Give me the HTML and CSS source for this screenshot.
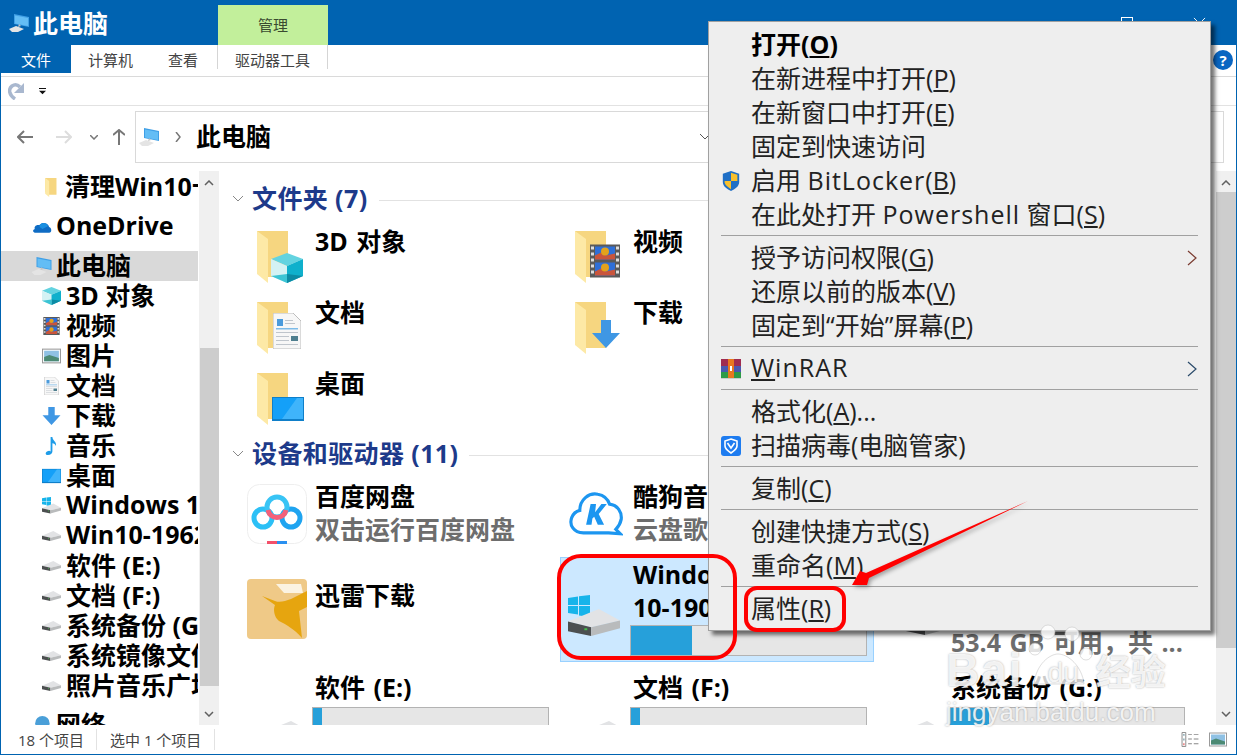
FILE: index.html
```html
<!DOCTYPE html>
<html lang="zh-CN">
<head>
    <meta charset="UTF-8">
    <title>此电脑</title>
    <link rel="stylesheet" href="styles.css">
</head>
<body>
    <!-- Shared icons -->
    <svg class="sprite" width="0" height="0">
        <symbol id="pc" viewBox="0 0 20 18">
            <path d="M5 0l15 3v10L5 10z" fill="#3f9fe6"/>
            <path d="M6 1.500l13 2.500v8L6 9.500z" fill="#63bdf5"/>
            <path d="M0 15l7-3 8 3-6 3H3z" fill="#e4e4e4"/>
            <path d="M10 10l2 2-3 1z" fill="#c4c4c4"/>
        </symbol>
        <symbol id="folder" viewBox="0 0 32 52">
            <path d="M0 0h31v46H10L0 38z" fill="#f6d680"/>
            <path d="M0 0l11 8v44L0 43z" fill="#fde9a6"/>
        </symbol>
        <symbol id="cube" viewBox="0 0 32 30">
            <path d="M16 0l16 6-16 7L0 6z" fill="#63d3e0"/>
            <path d="M0 6l16 7v17L0 23z" fill="#d4f2f4"/>
            <path d="M32 6L16 13v17l16-7z" fill="#0fb0cc"/>
            <path d="M16 21l16 2-16 7z" fill="#0c8ba4"/>
            <path d="M16 21L0 23l16 7z" fill="#3cc4d4"/>
        </symbol>
        <symbol id="film" viewBox="0 0 30 33">
            <path d="M0 0h30v33H0z" fill="#5a5a5a"/>
            <path d="M5 2h20v13H5zM5 18h20v13H5z" fill="#2e6fd8"/>
            <path d="M5 11l6-3 5 3 9-2v6H5zM5 27l6-3 5 3 9-2v6H5z" fill="#c9553c"/>
            <circle cx="15" cy="7" r="4" fill="#e2a21c"/>
            <circle cx="15" cy="23" r="4" fill="#e2a21c"/>
            <path d="M1 2h3v3H1zM1 8h3v3H1zM1 14h3v3H1zM1 20h3v3H1zM1 26h3v3H1zM26 2h3v3h-3zM26 8h3v3h-3zM26 14h3v3h-3zM26 20h3v3h-3zM26 26h3v3h-3z" fill="#ddd"/>
        </symbol>
        <symbol id="pic" viewBox="0 0 18 14">
            <path d="M0 0h18v14H0z" fill="#9a9a9a"/>
            <path d="M1 1h16v12H1z" fill="#fff"/>
            <path d="M2 2h14v10H2z" fill="#8fc1e4"/>
            <path d="M2 8l5-2 9 3v3H2z" fill="#4c8a74"/>
        </symbol>
        <symbol id="doc" viewBox="0 0 28 36">
            <path d="M0 0h20l8 8v28H0z" fill="#f7f7f7" stroke="#bdbdbd"/>
            <path d="M4 6h6v7H4z" fill="#4b9bdc"/>
            <path d="M3 15h22v1.500H3z" fill="#7cbbe8"/>
            <path d="M3 19h22v1H3zM3 23h13v1H3zM3 27h13v1H3zM3 31h22v1H3zM12 7h8v1h-8zM12 10h10v1H12z" fill="#bfc5cc"/>
            <path d="M18 23h7v5h-7z" fill="#4f7f8f"/>
        </symbol>
        <symbol id="down" viewBox="0 0 28 28">
            <path d="M9 0h10v13h9L14 28 0 13h9z" fill="#3f97e4"/>
        </symbol>
        <symbol id="desktop" viewBox="0 0 32 24">
            <path d="M0 0h32v24H0z" fill="#0f7fc9"/>
            <path d="M1 1h30v21H1z" fill="#14a0f8"/>
            <path d="M10 22L25 1h6v21z" fill="#3fb4fb"/>
        </symbol>
        <symbol id="drive" viewBox="0 0 54 28">
            <path d="M0 13L32 0l22 12-30 7z" fill="#e2e3e5"/>
            <path d="M0 13l24 6v9L0 23z" fill="#4c4f50"/>
            <path d="M24 19l30-7v8l-30 8z" fill="#b9bbbc"/>
            <path d="M17 20h3v2h-3z" fill="#45c24a"/>
        </symbol>
        <symbol id="win" viewBox="0 0 22 22">
            <path d="M0 3l10-1.500V10H0zM11 1.300L22 0v10H11zM0 11h10v8.500L0 18zM11 11h11v11l-11-1.500z" fill="#17b4ea"/>
        </symbol>
        <symbol id="note" viewBox="0 0 14 20">
            <path d="M6 0h2c0 4 5 5 4 10-1-2-2-3-4-3v9c0 2-2 4-5 4s-3-3-1-4 3-1 4 0z" fill="#1e9ce8"/>
        </symbol>
    </svg>

    <div class="window">
        <div class="titlebar">
            <svg class="title-icon"><use href="#pc"/></svg>
            <span class="title-text">此电脑</span>
            <div class="manage-tab">管理</div>
            <div class="win-controls">
                <span class="win-max"></span>
                <svg class="win-close" viewBox="0 0 14 14"><path d="M1 1l12 12M13 1L1 13" stroke="#fff" fill="none"/></svg>
            </div>
        </div>

        <div class="tabs">
            <div class="tab tab-file">文件</div>
            <div class="tab tab-pc">计算机</div>
            <div class="tab tab-view">查看</div>
            <div class="tab tab-tools">驱动器工具</div>
            <div class="help">?</div>
        </div>

        <div class="qat">
            <svg class="qat-undo" viewBox="0 0 18 18">
                <path d="M7 17C1 13 0 7 4 4c3-2 6-1 8 1" stroke="#a9b8cf" stroke-width="3.500" fill="none"/>
                <path d="M16 1v10H6z" fill="#a9b8cf"/>
            </svg>
            <svg class="qat-more" viewBox="0 0 8 8"><path d="M0 0h8v1H0zM0 3h8L4 7z" fill="#111"/></svg>
        </div>

        <div class="addressbar">
            <div class="nav-btns">
                <svg class="btn-back" viewBox="0 0 16 14"><path d="M7 1L1 7l6 6M1 7h15" stroke="#777" stroke-width="2" fill="none"/></svg>
                <svg class="btn-forward" viewBox="0 0 16 14"><path d="M9 1l6 6-6 6M15 7H0" stroke="#ddd" stroke-width="2" fill="none"/></svg>
                <svg class="btn-drop" viewBox="0 0 8 5"><path d="M0 0l4 4 4-4" stroke="#777" stroke-width="1.500" fill="none"/></svg>
                <svg class="btn-up" viewBox="0 0 12 16"><path d="M0 6l6-5 6 5M6 1v15" stroke="#777" stroke-width="2" fill="none"/></svg>
            </div>
            <div class="address">
                <svg class="address-icon"><use href="#pc"/></svg>
                <svg class="address-sep" viewBox="0 0 6 10"><path d="M1 0l4 5-4 5" stroke="#777" stroke-width="1.500" fill="none"/></svg>
                <span class="address-text">此电脑</span>
                <svg class="address-drop" viewBox="0 0 10 6"><path d="M0 0l5 5 5-5" stroke="#555" fill="none"/></svg>
            </div>
        </div>

        <div class="main">
            <div class="nav">
                <div class="nav-item"><svg class="nav-pin"><use href="#folder"/></svg><span>清理Win10卡顿文件</span></div>
                <div class="nav-item nav-root nav-onedrive">
                    <svg class="nav-icon" viewBox="0 0 22 14"><path d="M5 13h14c3 0 3-5 0-6-1-4-7-6-10-2-4-1-6 2-5 4-3 1-2 4 1 4z" fill="#0f6cc4"/><path d="M9 5c2-3 7-3 9 1l-6 3-3-2z" fill="#1a8fe0"/></svg>
                    <span>OneDrive</span>
                </div>
                <div class="nav-item nav-root nav-active"><svg class="nav-icon"><use href="#pc"/></svg><span>此电脑</span></div>
                <div class="nav-item"><svg class="nav-icon"><use href="#cube"/></svg><span>3D 对象</span></div>
                <div class="nav-item"><svg class="nav-icon"><use href="#film"/></svg><span>视频</span></div>
                <div class="nav-item"><svg class="nav-icon"><use href="#pic"/></svg><span>图片</span></div>
                <div class="nav-item"><svg class="nav-icon"><use href="#doc"/></svg><span>文档</span></div>
                <div class="nav-item"><svg class="nav-icon"><use href="#down"/></svg><span>下载</span></div>
                <div class="nav-item"><svg class="nav-icon"><use href="#note"/></svg><span>音乐</span></div>
                <div class="nav-item"><svg class="nav-icon"><use href="#desktop"/></svg><span>桌面</span></div>
                <div class="nav-item"><svg class="nav-icon nav-win"><use href="#win" width="9" height="9"/><use href="#drive" y="5" height="13"/></svg><span>Windows 10-1909 (C:)</span></div>
                <div class="nav-item"><svg class="nav-icon"><use href="#drive"/></svg><span>Win10-1962 (D:)</span></div>
                <div class="nav-item"><svg class="nav-icon"><use href="#drive"/></svg><span>软件 (E:)</span></div>
                <div class="nav-item"><svg class="nav-icon"><use href="#drive"/></svg><span>文档 (F:)</span></div>
                <div class="nav-item"><svg class="nav-icon"><use href="#drive"/></svg><span>系统备份 (G:)</span></div>
                <div class="nav-item"><svg class="nav-icon"><use href="#drive"/></svg><span>系统镜像文件 (H:)</span></div>
                <div class="nav-item"><svg class="nav-icon"><use href="#drive"/></svg><span>照片音乐广场 (I:)</span></div>
                <div class="nav-item nav-root nav-network">
                    <svg class="nav-icon" viewBox="0 0 22 20"><circle cx="12" cy="8" r="8" fill="#4a9fd8"/><path d="M0 12h14v8H0z" fill="#3a86c8"/></svg>
                    <span>网络</span>
                </div>
            </div>
            <div class="scrollbar nav-scroll">
                <svg class="arrow" viewBox="0 0 10 6"><path d="M1 5l4-4 4 4" stroke="#606060" stroke-width="1.500" fill="none"/></svg>
                <div class="thumb nav-thumb"></div>
                <svg class="arrow arrow-end" viewBox="0 0 10 6"><path d="M1 1l4 4 4-4" stroke="#606060" stroke-width="1.500" fill="none"/></svg>
            </div>

            <div class="content">
                <div class="group-head">
                    <svg class="group-chevron" viewBox="0 0 10 6"><path d="M0 0l5 5 5-5" stroke="#888" fill="none"/></svg>
                    <span class="group-title">文件夹 (7)</span>
                    <div class="group-line"></div>
                </div>
                <div class="tiles folders">
                    <div class="tile">
                        <div class="tile-icon folder-icon"><svg class="folder-back"><use href="#folder"/></svg><svg class="over over-cube"><use href="#cube"/></svg></div>
                        <div class="tile-text"><div class="tile-name">3D 对象</div></div>
                    </div>
                    <div class="tile">
                        <div class="tile-icon folder-icon"><svg class="folder-back"><use href="#folder"/></svg><svg class="over over-film"><use href="#film"/></svg></div>
                        <div class="tile-text"><div class="tile-name">视频</div></div>
                    </div>
                    <div class="tile">
                        <div class="tile-icon folder-icon"><svg class="folder-back"><use href="#folder"/></svg></div>
                        <div class="tile-text"><div class="tile-name">图片</div></div>
                    </div>
                    <div class="tile">
                        <div class="tile-icon folder-icon"><svg class="folder-back"><use href="#folder"/></svg><svg class="over over-doc"><use href="#doc"/></svg></div>
                        <div class="tile-text"><div class="tile-name">文档</div></div>
                    </div>
                    <div class="tile">
                        <div class="tile-icon folder-icon"><svg class="folder-back"><use href="#folder"/></svg><svg class="over over-down"><use href="#down"/></svg></div>
                        <div class="tile-text"><div class="tile-name">下载</div></div>
                    </div>
                    <div class="tile">
                        <div class="tile-icon folder-icon"><svg class="folder-back"><use href="#folder"/></svg></div>
                        <div class="tile-text"><div class="tile-name">音乐</div></div>
                    </div>
                    <div class="tile">
                        <div class="tile-icon folder-icon"><svg class="folder-back"><use href="#folder"/></svg><svg class="over over-desktop"><use href="#desktop"/></svg></div>
                        <div class="tile-text"><div class="tile-name">桌面</div></div>
                    </div>
                </div>

                <div class="group-head group-devices">
                    <svg class="group-chevron" viewBox="0 0 10 6"><path d="M0 0l5 5 5-5" stroke="#888" fill="none"/></svg>
                    <span class="group-title">设备和驱动器 (11)</span>
                    <div class="group-line"></div>
                </div>
                <div class="tiles devices">
                    <div class="tile tile-app">
                        <div class="tile-icon app-icon">
                            <svg viewBox="0 0 60 60">
                                <rect x="0.500" y="0.500" width="59" height="59" rx="12" fill="#fff" stroke="#eee"/>
                                <circle cx="16" cy="34" r="9" fill="none" stroke="#2cc0f6" stroke-width="5"/>
                                <circle cx="44" cy="34" r="9" fill="none" stroke="#1fa4f0" stroke-width="5"/>
                                <circle cx="30" cy="23" r="10" fill="none" stroke="#38c4f5" stroke-width="5"/>
                                <path d="M21 26c2 10 16 10 18 0" fill="none" stroke="#f4607a" stroke-width="5"/>
                                <path d="M20 57h10v3H20z" fill="#f4506a"/>
                                <path d="M30 57h10v3H30z" fill="#2a90f0"/>
                            </svg>
                        </div>
                        <div class="tile-text"><div class="tile-name">百度网盘</div><div class="tile-sub">双击运行百度网盘</div></div>
                    </div>
                    <div class="tile tile-app">
                        <div class="tile-icon app-icon">
                            <svg class="kugou" viewBox="0 0 60 60">
                                <path d="M16 51C5 51 0 42 3 34c2-5 5-7 9-8 0-12 10-20 20-18 6 1 11 5 13 11 9 1 14 9 13 17-1 5-3 8-6 11l5 5-13-1c-2 0-4 0-6 0z" fill="#fff" stroke="#1c96f0" stroke-width="3.500"/>
                                <path d="M24 19h6l-1 9 7-9h6l-9 11 6 12h-7l-4-9-2 2-1 7h-6z" fill="#1c96f0"/>
                            </svg>
                        </div>
                        <div class="tile-text"><div class="tile-name">酷狗音乐</div><div class="tile-sub">云盘歌曲同步</div></div>
                    </div>
                    <div class="tile tile-xunlei">
                        <div class="tile-icon app-icon">
                            <svg viewBox="0 0 60 60">
                                <rect width="60" height="60" rx="4" fill="#efc987"/>
                                <path d="M29 5h25l2 9H37z" fill="#fbf3e2"/>
                                <path d="M15 17l13 5c5 2 10 0 16-2l16-8v16l-8 4 3 27c-8-9-15-13-23-17-5-4-6-12-4-16z" fill="#e6a50f"/>
                            </svg>
                        </div>
                        <div class="tile-text"><div class="tile-name">迅雷下载</div></div>
                    </div>
                    <div class="tile tile-selected">
                        <div class="tile-icon sys-icon">
                            <svg class="sys-win"><use href="#win"/></svg>
                            <svg class="sys-drive"><use href="#drive"/></svg>
                        </div>
                        <div class="tile-text">
                            <div class="tile-name">Windows</div>
                            <div class="tile-name">10-1909 (C:)</div>
                            <div class="bar bar-tall"><div class="bar-fill" style="width:26%"></div></div>
                        </div>
                    </div>
                    <div class="tile tile-d">
                        <div class="tile-icon drive-icon"><svg><use href="#drive"/></svg></div>
                        <div class="tile-text">
                            <div class="tile-name">Win10-1962 (D:)</div>
                            <div class="bar"><div class="bar-fill" style="width:30%"></div></div>
                            <div class="tile-sub">53.4 GB 可用，共 ...</div>
                        </div>
                    </div>
                    <div class="tile tile-drive">
                        <div class="tile-icon drive-icon"><svg><use href="#drive"/></svg></div>
                        <div class="tile-text">
                            <div class="tile-name">软件 (E:)</div>
                            <div class="bar"><div class="bar-fill" style="width:4%"></div></div>
                        </div>
                    </div>
                    <div class="tile tile-drive">
                        <div class="tile-icon drive-icon"><svg><use href="#drive"/></svg></div>
                        <div class="tile-text">
                            <div class="tile-name">文档 (F:)</div>
                            <div class="bar"><div class="bar-fill" style="width:4%"></div></div>
                        </div>
                    </div>
                    <div class="tile tile-drive">
                        <div class="tile-icon drive-icon"><svg><use href="#drive"/></svg></div>
                        <div class="tile-text">
                            <div class="tile-name">系统备份 (G:)</div>
                            <div class="bar"><div class="bar-fill" style="width:17%"></div></div>
                        </div>
                    </div>
                </div>
            </div>

            <div class="scrollbar content-scroll">
                <svg class="arrow" viewBox="0 0 10 6"><path d="M1 5l4-4 4 4" stroke="#606060" stroke-width="1.500" fill="none"/></svg>
                <div class="thumb content-thumb"></div>
                <svg class="arrow arrow-end" viewBox="0 0 10 6"><path d="M1 1l4 4 4-4" stroke="#606060" stroke-width="1.500" fill="none"/></svg>
            </div>
        </div>

        <div class="status">
            <span class="status-count">18 个项目</span>
            <span class="status-selected">选中 1 个项目</span>
            <div class="status-views">
                <svg class="view-details" viewBox="0 0 18 16">
                    <path d="M0.500 0.500h4v15h-4z" fill="#fff" stroke="#888"/>
                    <path d="M2 2h1v2H2zM2 7h1v2H2z" fill="#4a7f8f"/><path d="M2 12h1v2H2z" fill="#d33"/>
                    <path d="M7 2h4v1H7zM13 2h5v1h-5zM7 7h4v1H7zM13 7h5v1h-5zM7 12h4v1H7zM13 12h5v1h-5z" fill="#888"/>
                </svg>
                <svg class="view-large"><use href="#pic"/></svg>
            </div>
        </div>
    </div>

    <!-- Context menu -->
    <div class="menu">
        <div class="menu-item menu-default"><span class="menu-slot"></span><span class="menu-text">打开(<u>O</u>)</span></div>
        <div class="menu-item"><span class="menu-slot"></span><span class="menu-text">在新进程中打开(<u>P</u>)</span></div>
        <div class="menu-item"><span class="menu-slot"></span><span class="menu-text">在新窗口中打开(<u>E</u>)</span></div>
        <div class="menu-item"><span class="menu-slot"></span><span class="menu-text">固定到快速访问</span></div>
        <div class="menu-item">
            <span class="menu-slot">
                <svg class="menu-icon" viewBox="0 0 20 22">
                    <path d="M10 0l9 3v9c0 5-5 8-9 10-4-2-9-5-9-10V3z" fill="#1f6fc6"/>
                    <path d="M10 2v9h7V4zM10 11H3v2c1 3 4 5 7 7z" fill="#f8c02c"/>
                </svg>
            </span>
            <span class="menu-text">启用 <span class="latin">BitLocker</span>(<u>B</u>)</span>
        </div>
        <div class="menu-item"><span class="menu-slot"></span><span class="menu-text">在此处打开 <span class="latin">Powershell</span> 窗口(<u>S</u>)</span></div>
        <div class="menu-sep"></div>
        <div class="menu-item">
            <span class="menu-slot"></span><span class="menu-text">授予访问权限(<u>G</u>)</span>
            <svg class="menu-arrow" viewBox="0 0 10 16"><path d="M1 1l8 7-8 7" stroke="#7a3b30" stroke-width="1.200" fill="none"/></svg>
        </div>
        <div class="menu-item"><span class="menu-slot"></span><span class="menu-text">还原以前的版本(<u>V</u>)</span></div>
        <div class="menu-item"><span class="menu-slot"></span><span class="menu-text">固定到“开始”屏幕(<u>P</u>)</span></div>
        <div class="menu-sep"></div>
        <div class="menu-item">
            <span class="menu-slot">
                <svg class="menu-icon" viewBox="0 0 20 20">
                    <path d="M0 0h20v20H0z" fill="#a02c50"/>
                    <path d="M0 7h20v6H0z" fill="#4a58b0"/>
                    <path d="M0 13h20v6H0z" fill="#2e9a48"/>
                    <path d="M7 0h6v19H7z" fill="#e87820"/>
                    <path d="M9 7h2v5H9z" fill="#fff"/>
                    <path d="M0 19h20v1H0z" fill="#ccc"/>
                </svg>
            </span>
            <span class="menu-text latin"><u>W</u>inRAR</span>
            <svg class="menu-arrow" viewBox="0 0 10 16"><path d="M1 1l8 7-8 7" stroke="#2a4a6a" stroke-width="1.200" fill="none"/></svg>
        </div>
        <div class="menu-sep"></div>
        <div class="menu-item"><span class="menu-slot"></span><span class="menu-text">格式化(<u>A</u>)...</span></div>
        <div class="menu-item">
            <span class="menu-slot">
                <svg class="menu-icon" viewBox="0 0 20 20">
                    <rect width="20" height="20" rx="3" fill="#1e7cf0"/>
                    <path d="M10 3l6 2v5c0 3-3 5-6 7-3-2-6-4-6-7V5z" fill="none" stroke="#fff" stroke-width="1.600"/>
                    <path d="M6.500 7l3.500 5 3.500-5" fill="none" stroke="#fff" stroke-width="1.600"/>
                </svg>
            </span>
            <span class="menu-text">扫描病毒(电脑管家)</span>
        </div>
        <div class="menu-sep"></div>
        <div class="menu-item"><span class="menu-slot"></span><span class="menu-text">复制(<u>C</u>)</span></div>
        <div class="menu-sep"></div>
        <div class="menu-item"><span class="menu-slot"></span><span class="menu-text">创建快捷方式(<u>S</u>)</span></div>
        <div class="menu-item"><span class="menu-slot"></span><span class="menu-text">重命名(<u>M</u>)</span></div>
        <div class="menu-sep"></div>
        <div class="menu-item"><span class="menu-slot"></span><span class="menu-text">属性(<u>R</u>)</span></div>
    </div>

    <!-- Red annotations drawn over the screenshot -->
    <div class="mark mark-drive"></div>
    <div class="mark mark-props"></div>
    <svg class="mark-arrow" viewBox="0 0 1237 755">
        <path d="M1028 501L866 573l-6-2-8 14 15 0 2-7z" fill="#f00"/>
    </svg>

    <!-- Watermark -->
    <div class="watermark">
        <svg class="wm-paw" viewBox="0 0 80 70">
            <circle cx="22" cy="8" r="7"/>
            <circle cx="46" cy="10" r="7"/>
            <circle cx="9" cy="25" r="6"/>
            <circle cx="60" cy="30" r="6"/>
            <path d="M8 60C10 40 24 30 32 30c10 0 24 12 26 30z"/>
        </svg>
        <div class="wm-logo"><span class="wm-bai">Bai</span><span class="wm-du">du</span><span class="wm-jy">经验</span></div>
        <div class="wm-url">jingyan.baidu.com</div>
    </div>
</body>
</html>
```

FILE: styles.css
```css
* {
    box-sizing: border-box;
}
body {
    margin: 0;
    width: 1237px;
    height: 755px;
    position: relative;
    overflow: hidden;
    background-color: white;
    color: black;
    font-family: "Open Sans", "Noto Sans CJK SC", sans-serif;
}
.sprite {
    position: absolute;
}
.window {
    height: 755px;
    display: flex;
    flex-direction: column;
    border: 1px solid #0063b1;
    border-top: none;
}

/* Title bar */
.titlebar {
    height: 45px;
    background-color: #0063b1;
    display: flex;
    align-items: center;
    margin: 0 -1px;
    color: white;
    flex-shrink: 0;
}
.title-icon {
    width: 20px;
    height: 18px;
    margin-left: 9px;
}
.title-text {
    font-size: 25px;
    font-weight: 700;
    margin: 2px 0 0 4px;
    line-height: 45px;
}
.manage-tab {
    width: 110px;
    height: 40px;
    margin: 5px 0 0 110px;
    background-color: #c2ef9b;
    color: #3a4a30;
    font-size: 15px;
    text-align: center;
    line-height: 40px;
}
.win-controls {
    margin-left: auto;
    display: flex;
    align-items: flex-start;
    height: 45px;
    padding-top: 17px;
}
.win-max {
    width: 12px;
    height: 12px;
    border: 1px solid white;
}
.win-close {
    width: 13px;
    height: 13px;
    margin: 0 31px 0 60px;
}

/* Ribbon tabs */
.tabs {
    height: 32px;
    display: flex;
    flex-shrink: 0;
    position: relative;
    border-bottom: 1px solid #dadada;
    font-size: 15px;
    color: #444;
}
.tab {
    height: 28px;
    line-height: 30px;
}
.tab-file {
    width: 70px;
    background-color: #0063b1;
    color: white;
    text-align: center;
}
.tab-pc {
    margin-left: 17px;
}
.tab-view {
    margin-left: 35px;
}
.tab-tools {
    width: 111px;
    margin-left: 19px;
    text-align: center;
    border-left: 1px solid #d5d5d5;
    border-right: 1px solid #d5d5d5;
    height: 24px;
}
.help {
    position: absolute;
    right: 3px;
    top: 5px;
    width: 20px;
    height: 20px;
    border-radius: 50%;
    background-color: #0a66c2;
    color: white;
    font-size: 15px;
    font-weight: 700;
    text-align: center;
    line-height: 20px;
}

/* Quick access */
.qat {
    height: 29px;
    display: flex;
    align-items: center;
    flex-shrink: 0;
    border-bottom: 1px solid #e2e2e2;
}
.qat-undo {
    width: 18px;
    height: 18px;
    margin-left: 7px;
}
.qat-more {
    width: 7px;
    height: 7px;
    margin-left: 13px;
}

/* Address bar */
.addressbar {
    height: 65px;
    flex-shrink: 0;
    display: flex;
    padding-top: 5px;
}
.nav-btns {
    width: 134px;
    height: 52px;
    position: relative;
    display: flex;
    align-items: center;
}
.btn-back, .btn-forward {
    width: 16px;
    height: 14px;
}
.btn-back {
    margin-left: 16px;
}
.btn-forward {
    margin-left: 23px;
}
.btn-drop {
    width: 8px;
    height: 5px;
    margin-left: 18px;
}
.btn-up {
    width: 12px;
    height: 16px;
    margin-left: 15px;
}
.address {
    width: 1089px;
    height: 52px;
    border: 1px solid #d9d9d9;
    display: flex;
    align-items: center;
}
.address-icon {
    width: 20px;
    height: 18px;
    margin-left: 3px;
}
.address-sep {
    width: 6px;
    height: 10px;
    margin-left: 16px;
}
.address-text {
    font-size: 25px;
    font-weight: 700;
    margin: 0 0 4px 15px;
}
.address-drop {
    width: 10px;
    height: 6px;
    margin-left: 429px;
}

/* Main area */
.main {
    flex: 1;
    min-height: 0;
    display: flex;
    overflow: hidden;
}
.nav {
    width: 197px;
    padding-top: 1px;
    overflow: hidden;
    flex-shrink: 0;
}
.nav-item {
    height: 30px;
    display: flex;
    align-items: center;
    padding-left: 41px;
    gap: 5px;
    font-size: 25px;
    font-weight: 700;
    white-space: nowrap;
}
.nav-item span {
    margin-bottom: 4px;
}
.nav-root {
    padding-left: 30px;
    gap: 4px;
}
.nav-onedrive {
    margin-top: 10px;
}
.nav-active {
    margin-top: 9px;
    background-color: #d9d9d9;
}
.nav-network {
    margin-top: 9px;
}
.nav-icon {
    width: 19px;
    height: 18px;
    flex-shrink: 0;
}
.nav-root .nav-icon {
    width: 21px;
}
.nav-pin {
    width: 12px;
    height: 19px;
    margin: 0 3px 0 3px;
    flex-shrink: 0;
}
.scrollbar {
    background-color: #f0f0f0;
    display: flex;
    flex-direction: column;
    align-items: center;
    flex-shrink: 0;
}
.nav-scroll {
    width: 20px;
    margin-left: 1px;
}
.arrow {
    width: 10px;
    height: 6px;
    margin: 9px 0 7px;
    flex-shrink: 0;
}
.arrow-end {
    margin: auto 0 8px;
}
.thumb {
    background-color: #cdcdcd;
}
.nav-thumb {
    width: 19px;
    height: 338px;
    margin-top: 155px;
}
.content-scroll {
    width: 20px;
    margin-left: auto;
}
.content-thumb {
    width: 20px;
    height: 456px;
    margin-top: -1px;
}

/* Content pane */
.content {
    width: 997px;
    padding-top: 13px;
    overflow: hidden;
    flex-shrink: 0;
}
.group-head {
    height: 30px;
    display: flex;
    align-items: center;
    padding-left: 14px;
    margin-bottom: 14px;
}
.group-devices {
    margin-top: 9px;
    margin-bottom: 13px;
}
.group-chevron {
    width: 10px;
    height: 6px;
}
.group-title {
    margin: 0 0 5px 9px;
    font-size: 25px;
    font-weight: 700;
    letter-spacing: 0.4px;
    color: #1d3a8a;
}
.group-line {
    flex: 1;
    height: 1px;
    margin: 2px 8px 0 11px;
    background-color: #e2e2e2;
}
.tiles {
    display: grid;
    grid-template-columns: repeat(3, 318px);
    margin-left: 23px;
}
.folders {
    grid-auto-rows: 60px;
    row-gap: 11px;
}
.devices {
    grid-template-rows: 63px 105px 90px;
    row-gap: 12px;
}
.tile {
    display: flex;
    padding-left: 5px;
    min-width: 0;
    overflow: hidden;
}
.tile-icon {
    width: 60px;
    height: 60px;
    margin-right: 8px;
    position: relative;
    flex-shrink: 0;
}
.tile-text {
    font-size: 25px;
    font-weight: 700;
    line-height: 33px;
    min-width: 0;
    white-space: nowrap;
    word-spacing: 2px;
}
.folders .tile-name {
    line-height: 30px;
    margin-top: -2px;
}
.tile-sub {
    color: #6d6d6d;
}
.tile-app .tile-text {
    margin-top: -2px;
}
.folder-icon svg {
    position: absolute;
}
.folder-back {
    left: 10px;
    top: 3px;
    width: 32px;
    height: 52px;
}
.over-cube {
    left: 24px;
    top: 25px;
    width: 32px;
    height: 30px;
}
.over-film {
    left: 25px;
    top: 16px;
    width: 30px;
    height: 34px;
}
.over-doc {
    left: 26px;
    top: 14px;
    width: 28px;
    height: 36px;
}
.over-down {
    left: 27px;
    top: 21px;
    width: 28px;
    height: 28px;
}
.over-desktop {
    left: 25px;
    top: 27px;
    width: 32px;
    height: 24px;
}
.app-icon svg {
    display: block;
    width: 60px;
    height: 60px;
}
.tile-app .app-icon {
    margin-top: 2px;
}
.app-icon .kugou {
    width: 54px;
    height: 54px;
    margin: 3px 0 0 4px;
}
.tile-xunlei {
    grid-column: 1;
    padding-top: 22px;
}
.tile-xunlei .tile-name {
    line-height: 33px;
}
.tile-selected {
    background-color: #cce8ff;
    border: 1px solid #99d1ff;
    padding-left: 4px;
    overflow: hidden;
    width: 314px;
    position: relative;
}
.sys-icon {
    margin-right: 5px;
}
.sys-win {
    position: absolute;
    left: 3px;
    top: 37px;
    width: 22px;
    height: 22px;
}
.sys-drive {
    position: absolute;
    left: 3px;
    top: 51px;
    width: 52px;
    height: 27px;
}
.tile-selected .tile-text {
    width: 237px;
}
.tile-selected .tile-name {
    padding-left: 3px;
}
.bar {
    width: 237px;
    height: 20px;
    border: 1px solid #b3b3b3;
    background-color: #e6e6e6;
    margin-left: -3px;
}
.bar-tall {
    height: 31px;
    margin-left: 0;
    margin-top: 1px;
}
.bar-fill {
    height: 100%;
    background-color: #26a0da;
}
.tile-drive .tile-name {
    margin: -3px 0 3px;
}
.tile-d {
    padding-top: 16px;
}
.drive-icon svg {
    position: absolute;
    left: 12px;
    top: 47px;
    width: 54px;
    height: 28px;
}
.tile-d .drive-icon svg {
    left: 18px;
    top: 34px;
}

/* Status bar */
.status {
    height: 29px;
    flex-shrink: 0;
    display: flex;
    align-items: center;
    font-size: 15px;
    color: #444;
    position: relative;
}
.status-count {
    width: 96px;
    padding-left: 17px;
    border-right: 1px solid #e2e2e2;
}
.status-selected {
    width: 118px;
    padding-left: 13px;
    border-right: 1px solid #e2e2e2;
}
.status-views {
    margin-left: auto;
    display: flex;
    gap: 10px;
    margin-right: 9px;
}
.view-details, .view-large {
    width: 18px;
    height: 15px;
}

/* Context menu */
.menu {
    position: absolute;
    left: 708px;
    top: 21px;
    width: 503px;
    height: 610px;
    padding: 6px 12px 0;
    background-color: #eeeeee;
    border: 1px solid #a0a0a0;
    box-shadow: 4px 4px 4px rgba(0, 0, 0, 0.55);
    font-size: 25px;
    color: #222;
}
.menu-item {
    height: 34px;
    display: flex;
    align-items: center;
    white-space: nowrap;
}
.menu-text {
    margin-bottom: 4px;
}
.menu-default {
    font-weight: 700;
    color: black;
}
.latin {
    letter-spacing: 1px;
}
.menu-slot {
    width: 30px;
    height: 20px;
    flex-shrink: 0;
}
.menu-icon {
    display: block;
    width: 20px;
    height: 20px;
}
.menu-arrow {
    width: 10px;
    height: 16px;
    margin-left: auto;
    margin-right: 1px;
}
.menu-sep {
    height: 1px;
    margin: 3px 0 5px;
    background-color: #a0a0a0;
}

/* Annotations */
.mark {
    position: absolute;
    border: 4px solid #f00;
}
.mark-drive {
    left: 557px;
    top: 554px;
    width: 180px;
    height: 106px;
    border-radius: 24px;
}
.mark-props {
    left: 744px;
    top: 586px;
    width: 102px;
    height: 46px;
    border-radius: 13px;
}
.mark-arrow {
    position: absolute;
    left: 0;
    top: 0;
    width: 1237px;
    height: 755px;
    filter: drop-shadow(2px 2px 2px rgba(0, 0, 0, 0.35));
}

/* Watermark */
.watermark {
    position: absolute;
    left: 946px;
    top: 645px;
    color: rgba(255, 255, 255, 0.85);
    text-shadow: 0 0 2px rgba(110, 110, 110, 0.6);
    white-space: nowrap;
}
.wm-paw {
    position: absolute;
    left: 80px;
    top: -21px;
    width: 80px;
    height: 70px;
    fill: rgba(255, 255, 255, 0.8);
    stroke: rgba(190, 190, 190, 0.5);
}
.wm-logo {
    height: 50px;
    display: flex;
    align-items: flex-end;
    font-family: "Liberation Sans", sans-serif;
    position: relative;
}
.wm-bai {
    font-size: 46px;
    font-weight: 700;
    letter-spacing: 2px;
    line-height: 50px;
}
.wm-du {
    font-size: 28px;
    margin-left: 24px;
    line-height: 44px;
}
.wm-jy {
    font-size: 35px;
    font-weight: 700;
    margin-left: 17px;
    font-family: "Noto Sans CJK SC", sans-serif;
    line-height: 50px;
}
.wm-url {
    font-family: "Liberation Sans", sans-serif;
    font-size: 26px;
    line-height: 30px;
    margin-top: 2px;
}
```
